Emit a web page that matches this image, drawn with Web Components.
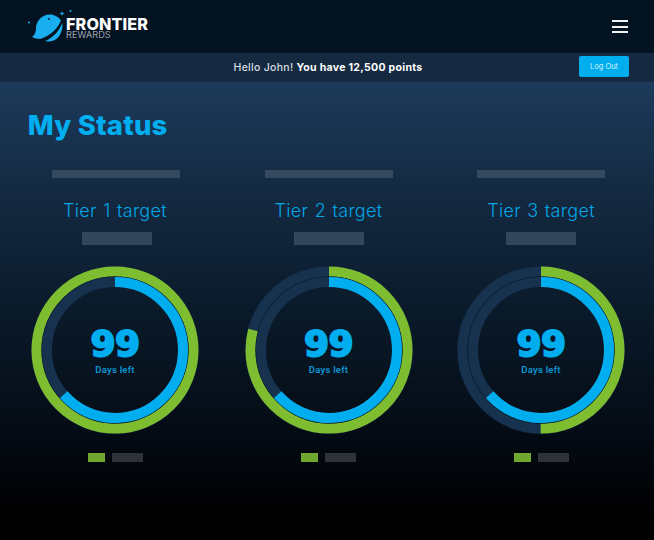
<!DOCTYPE html>
<html><head><meta charset="utf-8">
<style>
html,body{margin:0;padding:0;height:540px;overflow:hidden;background:#000}
body{font-family:"Inter","Liberation Sans",sans-serif}
</style></head>
<body>
<fr-app>
  <fr-header></fr-header>
  <fr-greeting>Hello John! <b>You have 12,500 points</b></fr-greeting>
  <fr-status heading="My Status">
    <fr-tier name="Tier 1 target" green="100" blue="63.5" shift="-1"></fr-tier>
    <fr-tier name="Tier 2 target" green="79" blue="63.5"></fr-tier>
    <fr-tier name="Tier 3 target" green="50" blue="63.5"></fr-tier>
  </fr-status>
</fr-app>
<script>
function def(name,html){
  customElements.define(name,class extends HTMLElement{
    connectedCallback(){
      if(this.shadowRoot)return;
      const r=this.attachShadow({mode:'open'});
      r.innerHTML=typeof html==='function'?html(this):html;
    }
  });
}
def('fr-app',`<style>:host{display:flex;flex-direction:column;width:654px;height:540px;overflow:hidden;color:#fff;font-family:"Inter","Liberation Sans",sans-serif;background:linear-gradient(180deg,#1c3a5a 82px,#12263c 220px,#0a1a2a 310px,#050d17 420px,#03070e 460px,#010204 500px,#000 525px)}</style><slot></slot>`);
def('fr-header',`<style>
:host{display:flex;align-items:center;justify-content:space-between;height:53px;box-sizing:border-box;padding:0 26px 0 27px;background:#041322}
.logo{display:flex;align-items:center;gap:1px}
svg.mark{display:block;width:46px;height:36px;margin:-1px -8px 0 0}
.words{display:flex;flex-direction:column;line-height:1;margin-top:3px}
.a{font:800 16.200px/14px "Inter","Liberation Sans",sans-serif;color:#fff;letter-spacing:.1px}
.b{font:300 9.200px/8px "Inter","Liberation Sans",sans-serif;color:#c4ccd4;letter-spacing:.1px}
.menu{display:flex;flex-direction:column;gap:3.500px;width:16px}
.menu i{display:block;height:2px;background:#f0f2f4}
</style>
<div class="logo">
<svg class="mark" viewBox="0 0 46 36"><circle cx="2" cy="14.500" r="1" fill="#19aeef"/><path d="M35 3.200l.7 1.600 1.600.7-1.600.7-.7 1.600-.7-1.600-1.600-.7 1.600-.7z" fill="#19aeef"/><circle cx="43.500" cy="3" r="1" fill="#19aeef"/>
<path d="M5 29 C7.500 27 9 24.500 9 20.500 C9 13 15 6.500 22.500 6.500 C27.500 6.500 31.500 9 34 12.500 C31 20 24 27.500 14 30.800 C11 31 7.500 30.500 5 29Z" fill="#19aeef"/>
<path d="M35.300 15 C36.500 24 31 33.500 22 33.500 C20.500 33.500 19 33.300 18 33 C26 30 32 23 35.300 15Z" fill="#19aeef"/>
<circle cx="22" cy="11" r=".9" fill="#041322"/></svg>
<div class="words"><span class="a">FRONTIER</span><span class="b">REWARDS</span></div></div>
<div class="menu"><i></i><i></i><i></i></div>`);
def('fr-greeting',`<style>
:host{display:block;position:relative;height:29px;background:#152a40;color:#d8dde2;font:500 10.500px/29px "Inter","Liberation Sans",sans-serif;text-align:center;padding-left:2px;box-sizing:border-box;letter-spacing:.3px}
button{position:absolute;right:25px;top:3px;width:50px;height:21px;border:0;border-radius:2px;background:#00aeef;color:#d6f1fc;font:400 7.500px "Inter","Liberation Sans",sans-serif;padding:0 0 1px}
::slotted(b){color:#fff;font-weight:700}
</style><slot></slot><button>Log Out</button>`);
def('fr-status',el=>`<style>
:host{display:block;padding:26px 0 0 9.750px}
h1{margin:0 0 0 18px;font:800 27.500px/34px "Inter","Liberation Sans",sans-serif;color:#00aeef;letter-spacing:.2px}
.g{display:grid;grid-template-columns:repeat(3,212.500px);margin-top:28px}
</style><h1>${el.getAttribute('heading')}</h1><div class="g"><slot></slot></div>`);
customElements.define('fr-tier',class extends HTMLElement{
  connectedCallback(){
    if(this.shadowRoot)return;
    const r=this.attachShadow({mode:'open'});
    const g=+this.getAttribute('green'),b=+this.getAttribute('blue'),s=+(this.getAttribute('shift')||0);
    const C1=2*Math.PI*78.5,C2=2*Math.PI*68;
    r.innerHTML=`<style>
:host{display:flex;flex-direction:column;align-items:center}
.ph1{width:128px;height:8px;background:#364a5f}
.t{font:300 18px/22px "Inter","Liberation Sans",sans-serif;color:#00a6e6;margin-top:22px;letter-spacing:.3px;word-spacing:1px;transform:translateX(${s}px)}
.ph2{width:70px;height:13px;background:#33465a;margin-top:10px;transform:translateX(${-s}px)}
.ring{position:relative;width:168px;height:168px;margin-top:20.500px;transform:translateX(${s}px)}
svg{display:block;width:168px;height:168px}
.c{position:absolute;inset:0;display:flex;flex-direction:column;align-items:center;padding-top:61px;box-sizing:border-box}
.n{font:700 36px/34px "DejaVu Sans","Liberation Sans",sans-serif;color:#00aeef;-webkit-text-stroke:2px #00aeef;letter-spacing:-.5px}
.d{font:600 9.500px/12px "Roboto","Inter",sans-serif;color:#0a97d2;margin-top:3px;letter-spacing:.25px}
.lg{display:flex;gap:7px;margin-top:19px;transform:translateX(${s}px)}
.lg i{display:block;height:9px}
.lg .x{width:17px;background:#6fa82c}
.lg .y{width:31px;background:#2e3239}
</style>
<div class="ph1"></div><div class="t">${this.getAttribute('name')}</div><div class="ph2"></div>
<div class="ring"><svg viewBox="0 0 168 168" fill="none">
<circle cx="84" cy="84" r="83.500" stroke="#0f2338" stroke-width="1"/>
<g transform="rotate(-90 84 84)">
<circle cx="84" cy="84" r="78.500" stroke="#16324f" stroke-width="10"/>
<circle cx="84" cy="84" r="78.500" stroke="#7fbd30" stroke-width="10" stroke-dasharray="${C1*g/100} ${C1}"/>
<circle cx="84" cy="84" r="73.200" stroke="#0b1a2a" stroke-width=".8"/>
<circle cx="84" cy="84" r="68" stroke="#16324f" stroke-width="10"/>
<circle cx="84" cy="84" r="68" stroke="#00aeef" stroke-width="10" stroke-dasharray="${C2*b/100} ${C2}"/>
</g></svg>
<div class="c"><div class="n">99</div><div class="d">Days left</div></div></div>
<div class="lg"><i class="x"></i><i class="y"></i></div>`;
  }
});
</script>
</body></html>
